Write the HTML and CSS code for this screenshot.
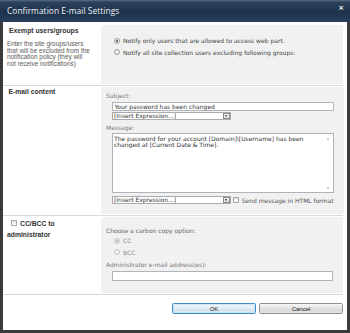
FILE: index.html
```html
<!DOCTYPE html>
<html>
<head>
<meta charset="utf-8">
<link rel="stylesheet" href="styles.css">
</head>
<body>
<div class="dialog">
  <div class="titlebar">
    <span class="title">Confirmation E-mail Settings</span>
    <span class="close">×</span>
  </div>
  <div class="frame">
    <div class="section s1">
      <div class="left">
        <div class="label">Exempt users/groups</div>
        <div class="desc">Enter the site groups/users<br>that will be excluded from the<br>notification policy (they will<br>not receive notifications)</div>
      </div>
      <div class="right">
        <div class="opt"><span class="radio on"></span>Notify only users that are allowed to access web part.</div>
        <div class="opt"><span class="radio"></span>Notify all site collection users excluding following groups:</div>
      </div>
    </div>
    <div class="sep"></div>
    <div class="section s2">
      <div class="left">
        <div class="label">E-mail content</div>
      </div>
      <div class="right">
        <div class="flabel">Subject:</div>
        <div class="input subj">Your password has been changed</div>
        <div class="select sel1"><span class="txt">[Insert Expression...]</span><span class="btn"></span></div>
        <div class="flabel msg">Message:</div>
        <div class="textarea">
          <div class="tatext">The password for your account [Domain]\[Username] has been<br>changed at [Current Date &amp; Time].</div>
          <div class="scroll"><span class="up"></span><span class="down"></span></div>
        </div>
        <div class="row2">
          <div class="select"><span class="txt">[Insert Expression...]</span><span class="btn"></span></div>
          <span class="check html"></span><span class="htmltext">Send message in HTML format</span>
        </div>
      </div>
    </div>
    <div class="sep"></div>
    <div class="section s3">
      <div class="left">
        <div class="label cc"><span class="check"></span>CC/BCC to<br>administrator</div>
      </div>
      <div class="right">
        <div class="flabel choose">Choose a carbon copy option:</div>
        <div class="opt dis first"><span class="radio on"></span>CC</div>
        <div class="opt dis"><span class="radio"></span>BCC</div>
        <div class="flabel admin">Administrator e-mail address(es):</div>
        <div class="input adm"></div>
      </div>
    </div>
    <div class="footer">
      <span class="button ok">OK</span>
      <span class="button">Cancel</span>
    </div>
  </div>
</div>
</body>
</html>
```

FILE: styles.css
```css
* { box-sizing: border-box; margin: 0; padding: 0; }
html, body { width: 350px; height: 333px; overflow: hidden; background: #fff; }
body { font-family: "DejaVu Sans", Verdana, sans-serif; font-size: 6px; color: #444; }

.dialog { width: 350px; height: 333px; display: flex; flex-direction: column; }

.titlebar {
  height: 22px; flex: none;
  background: linear-gradient(#5a6e84 0, #2c425c 2px, #1e324b 55%, #263f5c 100%);
  display: flex; align-items: center; justify-content: space-between;
  padding: 0 6px 1px 7px; color: #eef2f6;
  opacity: 0.999;
}
.title { font-family: "Open Sans", "Liberation Sans", sans-serif; font-size: 8.4px; letter-spacing: 0.05px; }
.close { font-family: "DejaVu Sans", sans-serif; font-size: 7px; font-weight: bold; margin-top: -5px; color: #fff; }

.frame {
  flex: 1; display: flex; flex-direction: column;
  border: 3px solid #3a3a3a; border-top: 0;
  padding: 3px 4px 0 0; background: #fff;
  opacity: 0.999;
}

.section { display: grid; grid-template-columns: 98px 1fr; }
.s1 { height: 59px; }
.s2 { height: 127px; }
.s3 { height: 76px; }
.sep { height: 1px; background: #dadada; margin: 1px 0; }

.right { background: #f1f1f1; padding: 0 10px 0 5px; }
.left { padding-left: 4px; }

.label { font-family: "Liberation Sans", Tahoma, sans-serif; font-weight: bold; font-size: 6.8px; line-height: 7px; color: #333; padding-left: 2px; }
.desc { font-family: "Liberation Sans", Tahoma, sans-serif; font-size: 6.4px; line-height: 6.45px; color: #5a5a5a; margin-top: 7.3px; }

.s1 .left { padding-top: 2.2px; }
.s1 .right { padding-top: 10px; }
.s2 .left { padding-top: 1px; }
.s2 .label { padding-left: 1.5px; }
.s2 .right { padding-top: 5px; }
.s3 .left { padding-top: 0.5px; }
.s3 .label.cc { padding-left: 0; line-height: 11.5px; }

.opt { display: flex; align-items: center; height: 11.6px; margin-left: 8px; white-space: nowrap; }
.radio {
  width: 6px; height: 6px; border-radius: 50%; border: 1px solid #9a9a9a;
  background: radial-gradient(circle, #fdfdfd, #e4e4e4); margin-right: 3px; flex: none;
  display: flex; align-items: center; justify-content: center;
}
.radio.on::after { content: ""; width: 2px; height: 2px; border-radius: 50%; background: #3b3b3b; }
.opt.dis { color: #8a8a8a; }
.opt.dis .radio { border-color: #c4c4c4; }
.opt.dis .radio.on::after { background: #9c9c9c; }
.opt.first { margin-top: 1.5px; }

.flabel { line-height: 7px; color: #7a7a7a; }
.flabel.msg { margin-top: 4px; }
.flabel.choose { margin-top: 9.5px; color: #666; }
.flabel.admin { margin-top: 2.5px; color: #777; }

.input { margin-left: 6px; height: 9px; border: 1px solid #b0b3ba; background: #fff; line-height: 7px; padding-left: 1.5px; color: #333; }
.subj { margin-top: 3px; }
.adm { margin-top: 3.8px; height: 9.5px; }

.select {
  margin-left: 6px; width: 119px; height: 8px; border: 1px solid #a9abb0; background: #fff;
  display: flex; align-items: center; padding-left: 1px; color: #333; flex: none;
}
.sel1 { margin-top: 1px; }
.select .txt { flex: 1; line-height: 6px; }
.select .btn {
  width: 7px; height: 6px; border: 1px solid #8c8c8c; background: linear-gradient(#fafafa, #dadada);
  display: flex; align-items: center; justify-content: center; margin-right: 0.5px;
}
.select .btn::after { content: ""; border-left: 1.5px solid transparent; border-right: 1.5px solid transparent; border-top: 2px solid #222; }

.textarea {
  margin-left: 6px; margin-top: 2px; height: 60px; border: 1px solid #adb2bb; background: #fff;
  display: flex; color: #333;
}
.tatext { flex: 1; padding: 2px 0 0 1px; line-height: 6px; white-space: nowrap; }
.scroll { width: 9px; display: flex; flex-direction: column; justify-content: space-between; align-items: center; padding: 4px 0 3px; }
.scroll .up { border-left: 1.5px solid transparent; border-right: 1.5px solid transparent; border-bottom: 2px solid #9a9a9a; }
.scroll .down { border-left: 1.5px solid transparent; border-right: 1.5px solid transparent; border-top: 2px solid #9a9a9a; }

.row2 { display: flex; align-items: center; margin-top: 3px; white-space: nowrap; }
.check { display: inline-block; width: 6px; height: 6px; border: 1px solid #a8a8a8; background: linear-gradient(#e6e6e6, #fbfbfb); vertical-align: -0.5px; }
.check.html { margin-left: 2px; margin-right: 2.7px; flex: none; }
.htmltext { color: #555; }
.label.cc .check { margin-left: 4px; margin-right: 3px; }

.footer {
  flex: 1; border-top: 1px solid #d6d6d6; margin-top: 1px;
  display: flex; justify-content: flex-end; align-items: flex-start; gap: 3px;
  padding: 8px 0 0 0;
}
.button {
  width: 84px; height: 11px; border: 1px solid #8e8f8f; border-radius: 1.5px;
  background: linear-gradient(#f6f6f6, #e3e3e3 50%, #d9d9d9 51%, #e2e2e2);
  font-family: "Liberation Sans", Tahoma, sans-serif; font-size: 6px; color: #222;
  display: flex; align-items: center; justify-content: center;
}
.button.ok { border-color: #3d8ec9; background: linear-gradient(#f0f6fa, #e2ecf3 50%, #d3e3ee 51%, #dbe8f0); box-shadow: inset 0 0 0 0.5px #b6daf2; }
```
